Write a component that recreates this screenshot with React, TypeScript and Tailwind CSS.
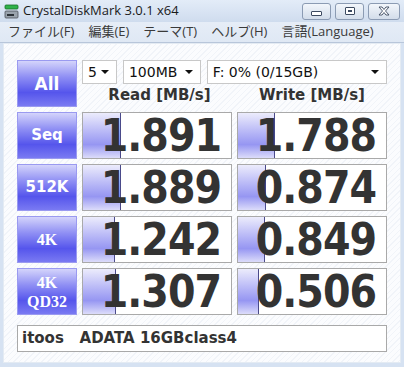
import React from 'react'

const rows = [
  { label: ['Seq'], serif: false, read: '1.891', write: '1.788', rBar: 38, wBar: 37 },
  { label: ['512K'], serif: false, read: '1.889', write: '0.874', rBar: 38, wBar: 28 },
  { label: ['4K'], serif: true, read: '1.242', write: '0.849', rBar: 32, wBar: 27 },
  { label: ['4K', 'QD32'], serif: true, read: '1.307', write: '0.506', rBar: 33, wBar: 21 },
]

const btn =
  'flex flex-col items-center justify-center border border-[#9a9af0] bg-[linear-gradient(to_bottom,#d4d4fb_0%,#9090f4_35%,#5555ec_70%,#7a7af2_100%)] text-white font-bold'

function ValueBox({ value, bar }: { value: string; bar: number }) {
  return (
    <div className="relative h-[47px] border border-[#a9a9a9] bg-white flex items-center justify-end pr-[10px]">
      <div
        className="absolute left-0 top-0 bottom-0 border-r border-[#4a4a8a] bg-[linear-gradient(to_bottom,#ececfc_0%,#b4b4f6_45%,#9696f2_70%,#dcdcfa_100%)]"
        style={{ width: bar }}
      />
      <span className="relative font-['DejaVu_Sans_Condensed','DejaVu_Sans',sans-serif] font-bold text-[44px] tracking-[-1px] text-[#333] leading-[44px]">
        {value}
      </span>
    </div>
  )
}

function Select({ w, text }: { w: string; text: string }) {
  return (
    <div className={`${w} h-[24px] border border-[#c8c8c8] bg-white flex items-center justify-between pl-[5px] pr-[7px] text-[14px] text-[#111]`}>
      <span>{text}</span>
      <span className="w-0 h-0 border-l-[4px] border-r-[4px] border-t-[4px] border-l-transparent border-r-transparent border-t-[#111]" />
    </div>
  )
}

export default function App() {
  return (
    <div className="w-[404px] h-[367px] overflow-hidden bg-[#d6e2f2] flex flex-col font-['DejaVu_Sans',sans-serif]">
      {/* title bar */}
      <div className="h-[22px] flex items-center pl-[4px] pr-[4px] bg-[linear-gradient(to_bottom,#e3ecf8,#cfdcee)]">
        <svg width="15" height="15" viewBox="0 0 15 15" className="mr-[4px]">
          <rect x="1" y="1" width="13" height="4" rx="1" fill="#2fb24a" stroke="#16702a" strokeWidth="0.8" />
          <rect x="1" y="7" width="13" height="7" rx="1" fill="#9aa3ad" stroke="#4b525a" strokeWidth="0.8" />
          <rect x="3" y="10" width="7" height="2" fill="#2d333a" />
        </svg>
        <span className="font-['Open_Sans',sans-serif] text-[13px] text-[#1a1a1a]">CrystalDiskMark 3.0.1 x64</span>
        <div className="ml-auto flex gap-[4px]">
          <div className="w-[29px] h-[17px] rounded-[3px] border border-[#8b9bb3] bg-[linear-gradient(to_bottom,#f2f6fb,#d3ddea)] flex items-center justify-center">
            <div className="w-[11px] h-[5px] rounded-[1px] border border-[#3c4a60] bg-white mt-[4px]" />
          </div>
          <div className="w-[29px] h-[17px] rounded-[3px] border border-[#8b9bb3] bg-[linear-gradient(to_bottom,#f2f6fb,#d3ddea)] flex items-center justify-center">
            <div className="w-[10px] h-[8px] rounded-[1px] border border-[#3c4a60] bg-white flex items-center justify-center">
              <div className="w-[4px] h-[2px] bg-[#3c4a60]" />
            </div>
          </div>
          <div className="w-[32px] h-[17px] rounded-[3px] border border-[#8b9bb3] bg-[linear-gradient(to_bottom,#f2f6fb,#d3ddea)] flex items-center justify-center">
            <svg width="14" height="10" viewBox="0 0 14 10">
              <path d="M2 1 L5 1 L7 3.5 L9 1 L12 1 L8.5 5 L12 9 L9 9 L7 6.5 L5 9 L2 9 L5.5 5 Z" fill="#fff" stroke="#3c4a60" strokeWidth="0.9" />
            </svg>
          </div>
        </div>
      </div>

      {/* menu */}
      <div className="h-[21px] flex items-center gap-[14px] pl-[8px] text-[13px] text-[#3a3a3a] font-['Open_Sans','Noto_Sans_CJK_JP',sans-serif] bg-[linear-gradient(to_bottom,#e6edf7,#dfe8f4)] border-b border-[#b8c6da]">
        <span>ファイル(F)</span>
        <span>編集(E)</span>
        <span>テーマ(T)</span>
        <span>ヘルプ(H)</span>
        <span>言語(Language)</span>
      </div>

      {/* content */}
      <div className="flex-1 mx-[3px] mb-[4px] border border-[#e4ebf3] bg-[#fafbfd] bg-[repeating-linear-gradient(135deg,#fbfcfe_0px,#fbfcfe_3px,#f1f4f9_3px,#f1f4f9_4px)] pt-[16px] pl-[13px]">
        <div className="grid grid-cols-[60px_150px_150px] gap-x-[5px] gap-y-[5px]">
          <div className={`${btn} h-[47px] text-[17px] leading-[20px] font-['DejaVu_Sans',sans-serif]`}>All</div>
          <div className="col-span-2 flex flex-col">
            <div className="flex gap-[6px]">
              <Select w="w-[35px]" text="5" />
              <Select w="w-[78px]" text="100MB" />
              <Select w="w-[181px]" text="F: 0% (0/15GB)" />
            </div>
            <div className="flex">
              <div className="w-[155px] text-center text-[15px] font-bold text-[#333] leading-[22px]">Read [MB/s]</div>
              <div className="w-[150px] text-center text-[15px] font-bold text-[#333] leading-[22px]">Write [MB/s]</div>
            </div>
          </div>

          {rows.map((r) => (
            <React.Fragment key={r.label.join(' ')}>
              <div
                className={`${btn} h-[47px] ${
                  r.serif
                    ? "font-['Liberation_Serif',serif] text-[16px] leading-[19px]"
                    : "font-['DejaVu_Sans',sans-serif] text-[15px] leading-[19px]"
                } ${r.label.length > 1 ? 'text-[#e8e8ff]' : ''}`}
              >
                {r.label.map((l) => (
                  <span key={l}>{l}</span>
                ))}
              </div>
              <ValueBox value={r.read} bar={r.rBar} />
              <ValueBox value={r.write} bar={r.wBar} />
            </React.Fragment>
          ))}
        </div>

        <div className="mt-[10px] w-[370px] h-[27px] border border-[#a9a9a9] bg-white flex items-center pl-[4px] text-[15px] font-bold text-[#333] whitespace-pre">
          itoos   ADATA 16GBclass4
        </div>
      </div>
    </div>
  )
}
